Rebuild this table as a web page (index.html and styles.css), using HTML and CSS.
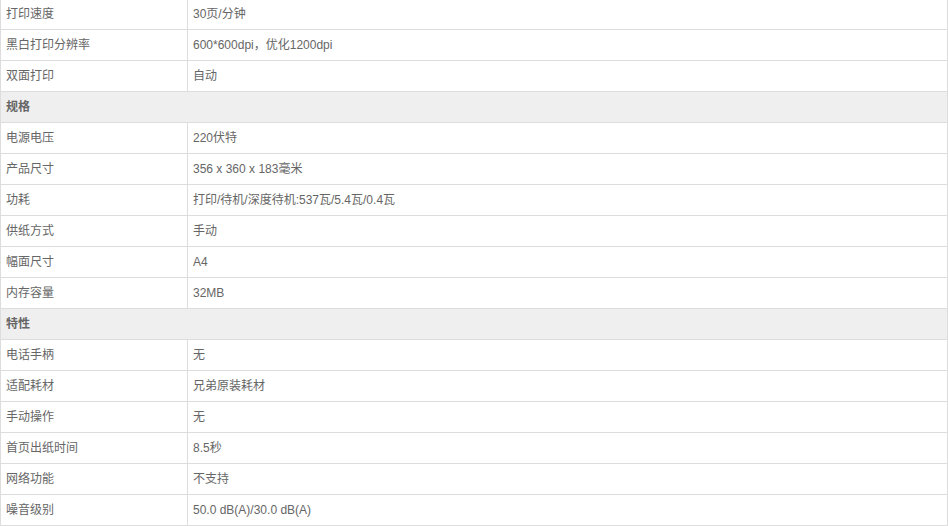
FILE: index.html
```html
<!DOCTYPE html>
<html lang="zh-CN">
<head>
<meta charset="utf-8">
<link rel="stylesheet" href="styles.css">
</head>
<body>
<div class="wrap">
<table class="spec">
<tbody>
<tr><td class="k">打印速度</td><td class="v">30页/分钟</td></tr>
<tr><td class="k">黑白打印分辨率</td><td class="v">600*600dpi，优化1200dpi</td></tr>
<tr><td class="k">双面打印</td><td class="v">自动</td></tr>
<tr class="sec"><td colspan="2">规格</td></tr>
<tr><td class="k">电源电压</td><td class="v">220伏特</td></tr>
<tr><td class="k">产品尺寸</td><td class="v">356 x 360 x 183毫米</td></tr>
<tr><td class="k">功耗</td><td class="v">打印/待机/深度待机:537瓦/5.4瓦/0.4瓦</td></tr>
<tr><td class="k">供纸方式</td><td class="v">手动</td></tr>
<tr><td class="k">幅面尺寸</td><td class="v">A4</td></tr>
<tr><td class="k">内存容量</td><td class="v">32MB</td></tr>
<tr class="sec"><td colspan="2">特性</td></tr>
<tr><td class="k">电话手柄</td><td class="v">无</td></tr>
<tr><td class="k">适配耗材</td><td class="v">兄弟原装耗材</td></tr>
<tr><td class="k">手动操作</td><td class="v">无</td></tr>
<tr><td class="k">首页出纸时间</td><td class="v">8.5秒</td></tr>
<tr><td class="k">网络功能</td><td class="v">不支持</td></tr>
<tr><td class="k">噪音级别</td><td class="v">50.0 dB(A)/30.0 dB(A)</td></tr>
</tbody>
</table>
</div>
</body>
</html>
```

FILE: styles.css
```css
html, body {
  margin: 0;
  padding: 0;
  background: #fff;
}
.wrap {
  margin-top: -2px;
  width: 948px;
}
.spec {
  width: 948px;
  border-collapse: collapse;
  table-layout: fixed;
  font-family: "Liberation Sans", Arial, "Noto Sans CJK SC", sans-serif;
  font-size: 12px;
  color: #666;
}
.spec td {
  border: 1px solid #ddd;
  height: 31px;
  padding: 0 5px;
  box-sizing: border-box;
  vertical-align: middle;
  line-height: 16px;
}
.spec td.k {
  width: 187px;
}
.spec td.v {
  padding-left: 5px;
}
.spec tr.sec td {
  background: #efefef;
  font-weight: bold;
}
```
